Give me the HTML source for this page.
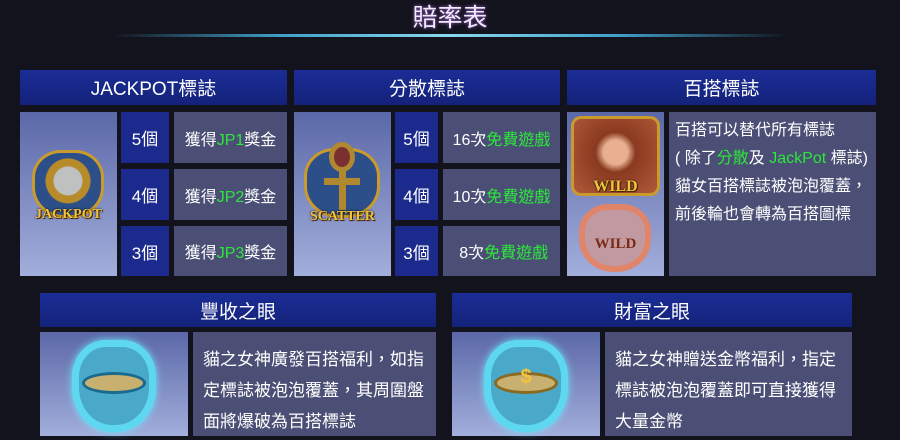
<!DOCTYPE html>
<html><head><meta charset="utf-8"><style>
*{margin:0;padding:0;box-sizing:border-box}
body{width:900px;height:440px;background:#13131d;font-family:"Liberation Sans","Noto Sans CJK TC",sans-serif;color:#fff;position:relative;overflow:hidden}
.a{position:absolute}
.h{background:linear-gradient(#1b2d96,#14227a);display:flex;align-items:center;justify-content:center;font-size:19px}
.c{background:#1b2a8c;display:flex;align-items:center;justify-content:center;font-size:17px}
.t{background:#4b4f75;display:flex;align-items:center;justify-content:center;font-size:16px}
.i{background:linear-gradient(#5b68a8,#a2aedb)}
.g{color:#2be83a}
.d{background:#4b4f75;font-size:16px;line-height:28px;padding:5px 6px}
.b{display:block;font-size:17px;line-height:31px;padding:12px 8px 0 10px;text-align:left}
.lbl{font-family:"Liberation Serif",serif;font-weight:bold;color:#f2c33c;text-shadow:0 0 2px #000,1px 1px 0 #5a3000;font-size:14px;position:absolute;width:100%;text-align:center}
</style></head><body>
<div class="a" style="left:0;width:900px;top:0;text-align:center;font-size:25px;line-height:36px;color:#f2eafa;text-shadow:0 0 3px #a46adc">賠率表</div>
<div class="a" style="left:112px;top:34px;width:676px;height:3px;background:linear-gradient(90deg,transparent,#3fa0c8 25%,#8ad8ee 50%,#3fa0c8 75%,transparent)"></div>

<div class="a h" style="left:20px;top:70px;width:267px;height:35px">JACKPOT標誌</div>
<div class="a h" style="left:294px;top:70px;width:266px;height:35px">分散標誌</div>
<div class="a h" style="left:567px;top:70px;width:309px;height:35px">百搭標誌</div>

<div class="a i" style="left:20px;top:112px;width:97px;height:164px">
<div class="a" style="left:12px;top:38px;width:72px;height:68px;border-radius:40% 40% 45% 45%;background:radial-gradient(circle at 50% 45%,#bfc0c0 0 14px,#b78a2a 15px 22px,#2c4f8a 23px);border:3px solid #c99a2c"></div>
<div class="lbl" style="top:95px">JACKPOT</div></div>
<div class="a c" style="left:121px;top:112px;width:48px;height:51px">5個</div>
<div class="a c" style="left:121px;top:169px;width:48px;height:51px">4個</div>
<div class="a c" style="left:121px;top:226px;width:48px;height:50px">3個</div>
<div class="a t" style="left:174px;top:112px;width:113px;height:51px"><span>獲得<span class="g">JP1</span>獎金</span></div>
<div class="a t" style="left:174px;top:169px;width:113px;height:51px"><span>獲得<span class="g">JP2</span>獎金</span></div>
<div class="a t" style="left:174px;top:226px;width:113px;height:50px"><span>獲得<span class="g">JP3</span>獎金</span></div>

<div class="a i" style="left:294px;top:112px;width:97px;height:164px">
<div class="a" style="left:10px;top:36px;width:76px;height:70px;border-radius:40% 40% 45% 45%;background:#2c4f8a;border:3px solid #c99a2c"></div>
<div class="a" style="left:35px;top:30px;width:26px;height:30px;border-radius:50%;border:5px solid #b08830;background:#7a3030"></div>
<div class="a" style="left:45px;top:58px;width:7px;height:40px;background:#b08830"></div>
<div class="a" style="left:30px;top:66px;width:36px;height:7px;background:#b08830"></div>
<div class="lbl" style="top:97px">SCATTER</div></div>
<div class="a c" style="left:395px;top:112px;width:43px;height:51px">5個</div>
<div class="a c" style="left:395px;top:169px;width:43px;height:51px">4個</div>
<div class="a c" style="left:395px;top:226px;width:43px;height:50px">3個</div>
<div class="a t" style="left:443px;top:112px;width:117px;height:51px"><span>16次<span class="g">免費遊戲</span></span></div>
<div class="a t" style="left:443px;top:169px;width:117px;height:51px"><span>10次<span class="g">免費遊戲</span></span></div>
<div class="a t" style="left:443px;top:226px;width:117px;height:50px"><span>&nbsp;8次<span class="g">免費遊戲</span></span></div>

<div class="a i" style="left:567px;top:112px;width:97px;height:164px">
<div class="a" style="left:4px;top:4px;width:89px;height:80px;border-radius:10px;border:3px solid #c99a2c;background:radial-gradient(circle at 50% 45%,#e8b090 0 12px,#8a3a20 20px,#b05a3a)"></div>
<div class="lbl" style="top:66px;font-size:16px">WILD</div>
<div class="a" style="left:12px;top:92px;width:72px;height:68px;border-radius:40% 40% 48% 48%;border:6px solid #e0856a;background:#c09aa0"></div>
<div class="a" style="left:0;width:97px;top:124px;text-align:center;font-family:'Liberation Serif',serif;font-weight:bold;color:#7a2a14;font-size:15px">WILD</div></div>
<div class="a d" style="left:669px;top:112px;width:207px;height:164px">百搭可以替代所有標誌<br>( 除了<span class="g">分散</span>及 <span class="g">JackPot</span> 標誌)<br>貓女百搭標誌被泡泡覆蓋，<br>前後輪也會轉為百搭圖標</div>

<div class="a h" style="left:40px;top:293px;width:396px;height:34px">豐收之眼</div>
<div class="a h" style="left:452px;top:293px;width:400px;height:34px">財富之眼</div>
<div class="a i" style="left:40px;top:332px;width:148px;height:104px">
<div class="a" style="left:32px;top:8px;width:84px;height:92px;border-radius:40% 40% 48% 48%;border:7px solid #5ed8f0;box-shadow:0 0 8px #6ee8ff;background:#4aa8c8"></div>
<div class="a" style="left:42px;top:40px;width:64px;height:22px;border-radius:50%;background:#c8b070;border:3px solid #1a6a90"></div></div>
<div class="a t b" style="left:193px;top:332px;width:243px;height:104px">貓之女神廣發百搭福利，如指定標誌被泡泡覆蓋，其周圍盤面將爆破為百搭標誌</div>
<div class="a i" style="left:452px;top:332px;width:148px;height:104px">
<div class="a" style="left:32px;top:8px;width:84px;height:92px;border-radius:40% 40% 48% 48%;border:7px solid #5ed8f0;box-shadow:0 0 8px #6ee8ff;background:#4aa8c8"></div>
<div class="a" style="left:42px;top:40px;width:64px;height:22px;border-radius:50%;background:#c8b070;border:3px solid #8a6a20"></div>
<div class="a" style="left:0;width:148px;top:34px;text-align:center;color:#f2c33c;font-weight:bold;font-size:20px">$</div></div>
<div class="a t b" style="left:605px;top:332px;width:247px;height:104px">貓之女神贈送金幣福利，指定標誌被泡泡覆蓋即可直接獲得大量金幣</div>
</body></html>
